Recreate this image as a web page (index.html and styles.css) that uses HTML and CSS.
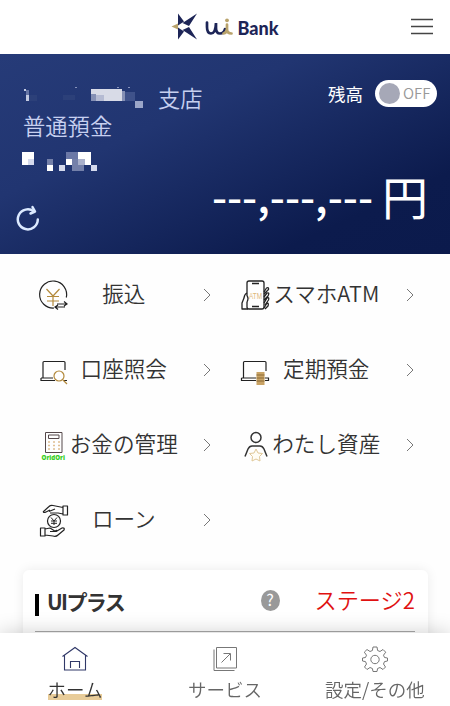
FILE: index.html
```html
<!DOCTYPE html>
<html lang="ja">
<head>
    <meta charset="UTF-8">
    <meta name="viewport" content="width=device-width, initial-scale=1.0">
    <title>UI Bank</title>
    <link rel="stylesheet" href="styles.css">
</head>
<body>
<div class="app">
    <header class="header">
        <div class="logo">
            <svg class="logo-mark" width="28" height="28" viewBox="0 0 28 28">
                <path d="M7 0.500 L13 8.500 L7 12.500 Z M7 26.500 L13 18.500 L7 14.500 Z M26 0.500 L18 13 L11.500 10 Z M26 26.500 L18 14 L11.500 17 Z" fill="#1d2557"/>
                <path d="M0.500 13.500 L7 10.500 V16.500 Z" fill="#b9a36c"/>
            </svg>
            <svg class="logo-ui" width="29" height="19" viewBox="0 0 29 19" fill="none" stroke-width="2.700" stroke-linecap="round">
                <path d="M2 4.500 V9 Q2 15.500 6 15.500 Q10.500 15.500 11 5 V10 Q11 15.500 15 15.500 Q19 15.500 20 11" stroke="#1d2557"/>
                <path d="M22 6.500 V11 Q22 15.500 26.500 15.500 M22 11 Q21.500 15 18.500 15.500" stroke="#b9a36c"/>
                <circle cx="22" cy="2.300" r="1.900" fill="#b9a36c"/>
            </svg>
            <span class="logo-text">Bank</span>
        </div>
        <svg class="hamburger" width="22" height="18" viewBox="0 0 22 18" stroke="#444" stroke-width="1.300">
            <path d="M0 1.500 H22 M0 8.500 H22 M0 15.500 H22"/>
        </svg>
    </header>

    <section class="account">
        <div class="account-top">
            <div class="account-info">
                <div class="branch">
                    <svg class="masked-name" width="124" height="22" viewBox="0 0 124 22" shape-rendering="crispEdges">
                        <path d="M2 2h2v2h-2z M4 8h3v6h-3z" fill="#c3cae1"/>
                        <path d="M4 3h3v5h-3z" fill="#6675a5"/>
                        <path d="M7 8h8v6H7z M41 8h12v5H41z" fill="#2c4079"/>
                        <path d="M53 0h2v1h-2z M95 0h2v1h-2z M106 0h2v1h-2z" fill="#8793bc"/>
                        <path d="M69 2h31v12H69z" fill="#d8dbe7"/>
                        <path d="M69 8h13v6H69z" fill="#b5bbd3"/>
                        <path d="M69 7h5v7h-5z M100 4h3v10h-3z" fill="#8590b5"/>
                        <path d="M103 5h10v9h-10z" fill="#3f528a"/>
                        <path d="M113 14h8v7h-8z" fill="#9ba6c8"/>
                    </svg>
                    <span class="branch-label">支店</span>
                </div>
                <div class="account-type">普通預金</div>
                <svg class="masked-number" width="78" height="20" viewBox="0 0 78 20" shape-rendering="crispEdges">
                    <path d="M0 0h12v13H0z M25 13h6v6h-6z M44 7h6v6h-6z M56 0h13v7H56z M63 7h6v6h-6z" fill="#fff"/>
                    <path d="M6 7h6v6H6z M37 13h6v6h-6z M69 13h6v6h-6z" fill="#d5daed"/>
                    <path d="M25 7h6v6h-6z M50 7h6v12h-6z M56 13h6v6h-6z" fill="#7480a9"/>
                    <path d="M44 0h12v7H44z" fill="#6b78a6"/>
                    <path d="M56 7h7v6h-7z" fill="#a9b0ca"/>
                </svg>
            </div>
            <div class="balance-switch">
                <span class="switch-label">残高</span>
                <span class="switch"><span class="switch-knob"></span><span class="switch-text">OFF</span></span>
            </div>
        </div>
        <div class="account-bottom">
            <svg class="reload" width="24" height="26" viewBox="0 0 24 26" fill="none" stroke="#dceaff" stroke-width="2.500" stroke-linecap="round" stroke-linejoin="round">
                <path d="M21.800 14.500 A10 10 0 1 1 18 6.500"/>
                <path d="M16.500 2 L19 6.500 L14.500 8.500"/>
            </svg>
            <div class="balance"><span class="balance-value">---,---,---</span><span class="balance-unit">円</span></div>
        </div>
    </section>

    <nav class="menu">
        <a class="menu-item">
            <svg class="menu-icon" width="32" height="34" viewBox="0 0 32 34" fill="none" stroke="#222" stroke-width="1.200">
                <path d="M28.300 19.500 A13.500 13.500 0 1 0 16 30"/>
                <path d="M8.500 11 L15 18 L21.500 11 M15 18 V28 M9 18.500 H21 M9 23 H21" stroke="#b38a3c"/>
                <path d="M19 26 H29 M26 23.500 L29 26 L26 28 M27 29 H17 M20 27 L17 29 L20 31.500"/>
            </svg>
            <span class="menu-label">振込</span>
            <svg class="chevron" width="8" height="14" viewBox="0 0 8 14"><path d="M1 1 L7 7 L1 13"/></svg>
        </a>
        <a class="menu-item">
            <svg class="menu-icon" width="32" height="34" viewBox="0 0 32 34" fill="none" stroke="#222" stroke-width="1.300" stroke-linejoin="round">
                <path d="M7 18 V5 Q7 3 9 3 H22 Q24 3 24 5 V29 Q24 31 22 31 H9 Q7 31 7 29 V24"/>
                <path d="M12 5.500 H19 M12 28.500 H19" stroke-width="1.600"/>
                <path d="M7 15 Q4.500 16 4 20 L2 25 V31 H8 M7 18 Q9 20 7 24"/>
                <path d="M24 14 L26.500 10 Q29 9 28.500 11.500 L24 16 M24 19 L27 15 Q30 14 28 18 L24 22 M24 25 L27 20 Q29.500 19 28.500 22 L25 27 M24 30 L27 25 Q29 25 28 28 L25 31"/>
                <text class="atm-text" x="9" y="21" textLength="13" lengthAdjust="spacingAndGlyphs">ATM</text>
            </svg>
            <span class="menu-label">スマホATM</span>
            <svg class="chevron" width="8" height="14" viewBox="0 0 8 14"><path d="M1 1 L7 7 L1 13"/></svg>
        </a>
        <a class="menu-item">
            <svg class="menu-icon" width="32" height="34" viewBox="0 0 32 34" fill="none" stroke="#222" stroke-width="1.200">
                <path d="M5 25 V9.500 Q5 8.500 6 8.500 H26 Q27 8.500 27 9.500 V17 M3 25 H15 M3 25 V27.500 H17 M26 27.500 H29"/>
                <circle cx="21" cy="23" r="5" stroke="#b38a3c" fill="#fff"/>
                <path d="M25 27 L29 31" stroke="#b38a3c"/>
            </svg>
            <span class="menu-label">口座照会</span>
            <svg class="chevron" width="8" height="14" viewBox="0 0 8 14"><path d="M1 1 L7 7 L1 13"/></svg>
        </a>
        <a class="menu-item">
            <svg class="menu-icon" width="32" height="34" viewBox="0 0 32 34" fill="none" stroke="#222" stroke-width="1.200">
                <path d="M3.500 25 V9.500 Q3.500 8.500 4.500 8.500 H25 Q26 8.500 26 9.500 V18 M1.500 25 H16 M1.500 25 V27.500 H16 M25 25 H28.500 V27.500 H25"/>
                <path d="M16.500 19 H24.500 V32 H16.500 Z" fill="#c9a365" stroke="none"/>
                <path d="M16.500 22 H24.500 M16.500 25 H24.500 M16.500 28 H24.500" stroke="#8b6a36" stroke-width="1"/>
            </svg>
            <span class="menu-label">定期預金</span>
            <svg class="chevron" width="8" height="14" viewBox="0 0 8 14"><path d="M1 1 L7 7 L1 13"/></svg>
        </a>
        <a class="menu-item">
            <svg class="menu-icon" width="32" height="34" viewBox="0 0 32 34" fill="none" stroke="#55484a" stroke-width="1">
                <path d="M7.500 4.500 H24 V24.500 H7.500 Z M10.500 7 H21 V10.500 H10.500 Z"/>
                <path d="M10 14 H22 M10 17.500 H22 M10 21 H22" stroke="#e0bf92" stroke-width="1.500" stroke-dasharray="2 3"/>
                <text class="ori-text" x="3.500" y="32" textLength="23.500" lengthAdjust="spacingAndGlyphs">OridOri</text>
            </svg>
            <span class="menu-label">お金の管理</span>
            <svg class="chevron" width="8" height="14" viewBox="0 0 8 14"><path d="M1 1 L7 7 L1 13"/></svg>
        </a>
        <a class="menu-item">
            <svg class="menu-icon" width="32" height="34" viewBox="0 0 32 34" fill="none" stroke="#333" stroke-width="1.500">
                <circle cx="16" cy="9.500" r="5"/>
                <path d="M5 28.500 L8 21 Q9.500 18 12 18 H20 Q22.500 18 24 21 L27 28.500"/>
                <path d="M16 21 L18 25 L22.500 25.500 L19.500 28.500 L20 33 L16 31 L12 33 L12.500 28.500 L9.500 25.500 L14 25 Z" stroke="#e0c898" stroke-width="1" fill="#fffdf5"/>
            </svg>
            <span class="menu-label">わたし資産</span>
            <svg class="chevron" width="8" height="14" viewBox="0 0 8 14"><path d="M1 1 L7 7 L1 13"/></svg>
        </a>
        <a class="menu-item">
            <svg class="menu-icon" width="32" height="34" viewBox="0 0 32 34" fill="none" stroke="#222" stroke-width="1.200" stroke-linejoin="round">
                <path d="M5 9 L11 3.500 Q12.500 2 15 2.500 L25 4.500 M5 9 Q6 10 8 9 L12 7 M11 8.500 L17 6 M12 10 H20 L25 11 M25 3 H29.500 V12 H25 Z"/>
                <circle cx="16" cy="18" r="6.500"/>
                <path d="M13 14.500 L16 18 L19 14.500 M16 18 V22 M13 18 H19 M13 20.300 H19" stroke-width="1"/>
                <path d="M2.500 25 H7 V33 H2.500 Z M7 26 L12 25 L16 27.500 Q18 28 19 28 M12 28.500 H18 Q19.500 28 18 27 M19 28 L24 25 Q27 24.500 26 27 L20 32 Q18 34 15 33 L7 32"/>
            </svg>
            <span class="menu-label">ローン</span>
            <svg class="chevron" width="8" height="14" viewBox="0 0 8 14"><path d="M1 1 L7 7 L1 13"/></svg>
        </a>
    </nav>

    <section class="plus-card">
        <div class="plus-head">
            <h2 class="plus-title">UIプラス</h2>
            <span class="help">?</span>
            <span class="stage">ステージ2</span>
        </div>
    </section>

    <footer class="tabbar">
        <a class="tab active">
            <svg width="28" height="26" viewBox="0 0 28 26" fill="none" stroke="#303868" stroke-width="1.100">
                <path d="M1.500 10.500 L14 1.500 L26.500 10.500 M3.500 9.500 V24 H24.500 V9.500 M9.500 22 V15.500 H18.500 V22"/>
            </svg>
            <span class="tab-label">ホーム</span>
        </a>
        <a class="tab">
            <svg width="28" height="26" viewBox="0 0 28 26" fill="none" stroke="#777" stroke-width="1">
                <path d="M5.500 1.500 H25.500 V22 H5.500 Z M3 3.500 V24.500 H23.500 M10.500 16.500 L19 8 M12.500 7.500 H19.500 V14.500"/>
            </svg>
            <span class="tab-label">サービス</span>
        </a>
        <a class="tab">
            <svg width="28" height="26" viewBox="0 0 28 26" fill="none" stroke="#777" stroke-width="1" stroke-linejoin="round">
                <path d="M12 1 H16 L16.600 4.500 L19 5.500 L22 3.500 L24.700 6.200 L22.500 9.200 L23.500 11.500 L26.500 12 V15 L23.500 15.600 L22.500 18 L24.500 21 L22 23.500 L19 21.500 L16.600 22.500 L16 25.500 H12 L11.400 22.500 L9 21.500 L6 23.500 L3.500 21 L5.500 18 L4.500 15.600 L1.500 15 V12 L4.500 11.500 L5.500 9.200 L3.300 6.200 L6 3.500 L9 5.500 L11.400 4.500 Z"/>
                <circle cx="14" cy="13.500" r="4.200"/>
            </svg>
            <span class="tab-label">設定/その他</span>
        </a>
    </footer>
</div>
</body>
</html>
```
FILE: styles.css
```css
:root {
    --navy: #1d2557;
    --text: #333;
    --text-sub: #666;
    --accent: #e8cc99;
}
* {
    box-sizing: border-box;
}
body {
    margin: 0;
    background-color: #fefefe;
    color: var(--text);
    font-family: 'Noto Sans CJK JP', sans-serif;
    font-weight: 350;
}
.app {
    display: flex;
    flex-direction: column;
    height: 100vh;
    overflow: hidden;
}

/* header */
.header {
    display: grid;
    grid-template-columns: 1fr auto 1fr;
    align-items: center;
    flex: 0 0 54px;
    padding: 0 17px;
    background-color: #fff;
}
.logo {
    grid-column: 2;
    display: flex;
    align-items: center;
}
.logo-mark {
    margin-right: 6px;
}
.logo-text {
    margin: 2px 0 0 3px;
    color: var(--navy);
    font-family: 'Lato', sans-serif;
    font-size: 18px;
    font-weight: 900;
    line-height: 24px;
}
.hamburger {
    justify-self: end;
}

/* account */
.account {
    display: flex;
    flex-direction: column;
    justify-content: space-between;
    flex: 0 0 200px;
    padding: 26px 13px 23px 22px;
    background: linear-gradient(155deg, #263b78 0%, #213571 35%, #0c1b4d 80%, #0b1a4c 100%);
}
.account-top {
    display: flex;
    justify-content: space-between;
    align-items: flex-start;
}
.account-info {
    padding-top: 3px;
    color: #c7d0f0;
    font-size: 22.3px;
    line-height: 28px;
}
.branch {
    display: flex;
    align-items: center;
}
.masked-name {
    margin-top: 2px;
}
.branch-label {
    margin-left: 12px;
}
.account-type {
    padding-left: 1px;
}
.masked-name,
.masked-number {
    display: block;
}
.masked-number {
    margin-top: 13px;
}
.balance-switch {
    display: flex;
    align-items: center;
    gap: 12px;
    color: #fff;
}
.switch-label {
    font-size: 17.5px;
    font-weight: 400;
    line-height: 27px;
}
.switch {
    display: flex;
    align-items: center;
    width: 62px;
    height: 27px;
    padding-left: 4px;
    border-radius: 14px;
    background-color: #fff;
}
.switch-knob {
    width: 21px;
    height: 21px;
    border-radius: 50%;
    background-color: #a6a8b7;
}
.switch-text {
    margin: -3px 0 0 3px;
    color: #999;
    font-size: 15px;
}
.account-bottom {
    display: flex;
    justify-content: space-between;
    align-items: flex-end;
    height: 56px;
    margin: 0 9px 0 -6px;
}
.balance {
    display: flex;
    align-items: center;
    margin-bottom: 8px;
    color: #fff;
    font-size: 42.3px;
    font-weight: 500;
    line-height: 56px;
}
.balance-unit {
    margin-left: 9px;
    font-size: 46px;
    font-weight: 400;
}

/* menu */
.menu {
    display: grid;
    grid-template-columns: repeat(2, 202.5px);
    grid-auto-rows: 75px;
    flex: none;
    padding: 3px 22.5px 0;
}
.menu-item {
    display: grid;
    grid-template-columns: 47px 1fr 47px;
    align-items: center;
}
.menu-icon {
    margin-left: 15px;
}
.menu-label {
    justify-self: center;
    font-size: 21.6px;
    line-height: 30px;
    white-space: nowrap;
    margin-top: -4px;
}
.chevron {
    justify-self: end;
    margin-right: 14px;
    fill: none;
    stroke: #777;
    stroke-width: 1;
}
.atm-text {
    fill: #dfb878;
    stroke: none;
    font-family: 'Liberation Sans', sans-serif;
    font-size: 9px;
}
.ori-text {
    fill: #35cf22;
    stroke: none;
    font-family: 'Open Sans', sans-serif;
    font-size: 7px;
    font-weight: 800;
}

/* plus card */
.plus-card {
    flex: none;
    height: 120px;
    margin: 13px 22.5px 0;
    padding: 0 12.5px;
    border-radius: 6px;
    background-color: #fff;
    box-shadow: 0 0 12px rgba(0, 0, 0, 0.08);
}
.plus-head {
    display: flex;
    align-items: center;
    height: 62px;
    border-bottom: 1px solid #aaa;
}
.plus-title {
    display: flex;
    align-items: center;
    flex: 1;
    margin: 0;
    font-size: 21px;
    font-weight: 700;
    line-height: 30px;
    letter-spacing: -1.6px;
}
.plus-title::before {
    content: '';
    width: 4px;
    height: 22px;
    margin: 9px 8px 0 0;
    background-color: #000;
}
.help {
    width: 19px;
    height: 21px;
    margin-right: 35px;
    border-radius: 50%;
    background-color: #999;
    color: #fff;
    font-size: 16px;
    font-weight: 400;
    line-height: 19px;
    text-align: center;
}
.stage {
    margin-top: -3px;
    color: #e01111;
    font-size: 22.2px;
}

/* tab bar */
.tabbar {
    position: fixed;
    left: 0;
    right: 0;
    bottom: 0;
    display: grid;
    grid-template-columns: repeat(3, 150px);
    height: 73px;
    padding-top: 13px;
    background-color: #fff;
    box-shadow: 0 0 20px rgba(0, 0, 0, 0.2);
}
.tab {
    display: flex;
    flex-direction: column;
    align-items: center;
    color: var(--text-sub);
}
.tab-label {
    margin-top: 5px;
    font-size: 18.5px;
    line-height: 24px;
}
.tab.active .tab-label {
    color: var(--text);
    background: linear-gradient(transparent 17px, var(--accent) 17px, var(--accent) 23px, transparent 23px);
}
```
